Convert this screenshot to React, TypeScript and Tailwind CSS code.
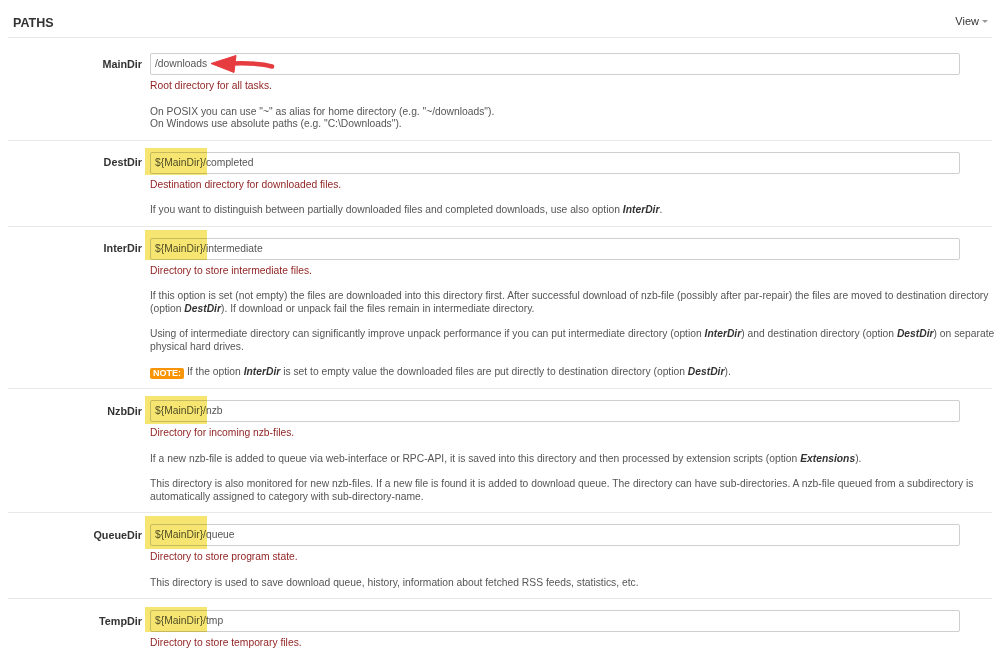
import React from "react";

type Option = {
  name: string;
  value: string;
  // marker box drawn over "${MainDir}": top offset and height
  mark?: { top: string; h: string };
  summary: string;
  paragraphs: React.ReactNode[];
  note?: React.ReactNode;
};

const options: Option[] = [
  {
    name: "MainDir",
    value: "/downloads",
    summary: "Root directory for all tasks.",
    paragraphs: [
      <>
        On POSIX you can use "~" as alias for home directory (e.g. "~/downloads").
        <br />
        On Windows use absolute paths (e.g. "C:\Downloads").
      </>,
    ],
  },
  {
    name: "DestDir",
    value: "/completed",
    mark: { top: "top-[-4px]", h: "h-[27px]" },
    summary: "Destination directory for downloaded files.",
    paragraphs: [
      <>
        If you want to distinguish between partially downloaded files and completed downloads, use also option{" "}
        <b className="italic text-[#333]">InterDir</b>.
      </>,
    ],
  },
  {
    name: "InterDir",
    value: "/intermediate",
    mark: { top: "top-[-8px]", h: "h-[30px]" },
    summary: "Directory to store intermediate files.",
    paragraphs: [
      <>
        If this option is set (not empty) the files are downloaded into this directory first. After successful download
        of nzb-file (possibly after par-repair) the files are moved to destination directory (option{" "}
        <b className="italic text-[#333]">DestDir</b>). If download or unpack fail the files remain in intermediate
        directory.
      </>,
      <>
        Using of intermediate directory can significantly improve unpack performance if you can put intermediate
        directory (option <b className="italic text-[#333]">InterDir</b>) and destination directory (option{" "}
        <b className="italic text-[#333]">DestDir</b>) on separate physical hard drives.
      </>,
    ],
    note: (
      <>
        If the option <b className="italic text-[#333]">InterDir</b> is set to empty value the downloaded files are put
        directly to destination directory (option <b className="italic text-[#333]">DestDir</b>).
      </>
    ),
  },
  {
    name: "NzbDir",
    value: "/nzb",
    mark: { top: "top-[-4px]", h: "h-[28px]" },
    summary: "Directory for incoming nzb-files.",
    paragraphs: [
      <>
        If a new nzb-file is added to queue via web-interface or RPC-API, it is saved into this directory and then
        processed by extension scripts (option <b className="italic text-[#333]">Extensions</b>).
      </>,
      <>
        This directory is also monitored for new nzb-files. If a new file is found it is added to download queue. The
        directory can have sub-directories. A nzb-file queued from a subdirectory is automatically assigned to category
        with sub-directory-name.
      </>,
    ],
  },
  {
    name: "QueueDir",
    value: "/queue",
    mark: { top: "top-[-8px]", h: "h-[33px]" },
    summary: "Directory to store program state.",
    paragraphs: [
      <>This directory is used to save download queue, history, information about fetched RSS feeds, statistics, etc.</>,
    ],
  },
  {
    name: "TempDir",
    value: "/tmp",
    mark: { top: "top-[-3px]", h: "h-[25px]" },
    summary: "Directory to store temporary files.",
    paragraphs: [],
  },
];

const Arrow = () => (
  <svg className="absolute left-[60px] top-[1px]" width="66" height="20" viewBox="0 0 66 20">
    <path d="M22 9.5 C 38 9, 52 9.5, 62 12.5" stroke="#e63b3f" strokeWidth="4.5" fill="none" strokeLinecap="round" />
    <path d="M1 9.5 L26 1.5 L24 18.5 Z" fill="#e63b3f" strokeLinejoin="round" stroke="#e63b3f" strokeWidth="1" />
  </svg>
);

const OptionRow = ({ opt, first }: { opt: Option; first: boolean }) => (
  <div className={`flex gap-2 pt-[11px] pb-[9px] ${first ? "" : "border-t border-[#e8e8e8]"}`}>
    <div className="w-[134px] shrink-0 h-[22px] flex items-center justify-end font-bold text-[#333] text-[10.8px]">
      {opt.name}
    </div>
    <div className="flex-1 mr-[-8px]">
      <div className="relative w-[810px]">
        <div className="h-[22px] border border-[#cfcfcf] rounded-[2px] flex items-center px-[4px] text-[10.3px] text-[#555]">
          {opt.mark && "${MainDir}"}
          {opt.value}
        </div>
        {opt.mark && (
          <div className={`absolute left-[-5px] ${opt.mark.top} ${opt.mark.h} w-[62px] bg-[#f4e04d]/80 mix-blend-multiply`} />
        )}
        {opt.name === "MainDir" && <Arrow />}
      </div>
      <p className="mt-[5px] text-[#8f1f1f] leading-[12.5px]">{opt.summary}</p>
      {opt.paragraphs.map((p, i) => (
        <p key={i} className="mt-[13px] leading-[12.5px]">
          {p}
        </p>
      ))}
      {opt.note && (
        <p className="mt-[13px] leading-[12.5px]">
          <span className="inline-block align-[-1px] bg-[#f89406] text-white font-bold text-[9px] leading-[11px] px-[3px] rounded-[2px] mr-[3px]">
            NOTE:
          </span>
          {opt.note}
        </p>
      )}
    </div>
  </div>
);

export default function App() {
  return (
    <div
      className="w-[1000px] h-[652px] overflow-hidden bg-white px-2 text-[10.3px] text-[#555]"
      style={{ fontFamily: '"Liberation Sans", Arial, sans-serif' }}
    >
      <div className="h-[38px] flex items-start justify-between border-b border-[#e8e8e8] pl-[5px] pr-[4px]">
        <h2 className="mt-[16px] font-bold text-[12.5px] leading-[15px] text-[#333]">PATHS</h2>
        <div className="mt-[14px] flex items-center gap-[3px] text-[#333] text-[11px] leading-[14px]">
          View
          <span className="w-0 h-0 border-x-[3px] border-x-transparent border-t-[3px] border-t-[#999]" />
        </div>
      </div>
      <div className="pt-[4px]">
        {options.map((opt, i) => (
          <OptionRow key={opt.name} opt={opt} first={i === 0} />
        ))}
      </div>
    </div>
  );
}
